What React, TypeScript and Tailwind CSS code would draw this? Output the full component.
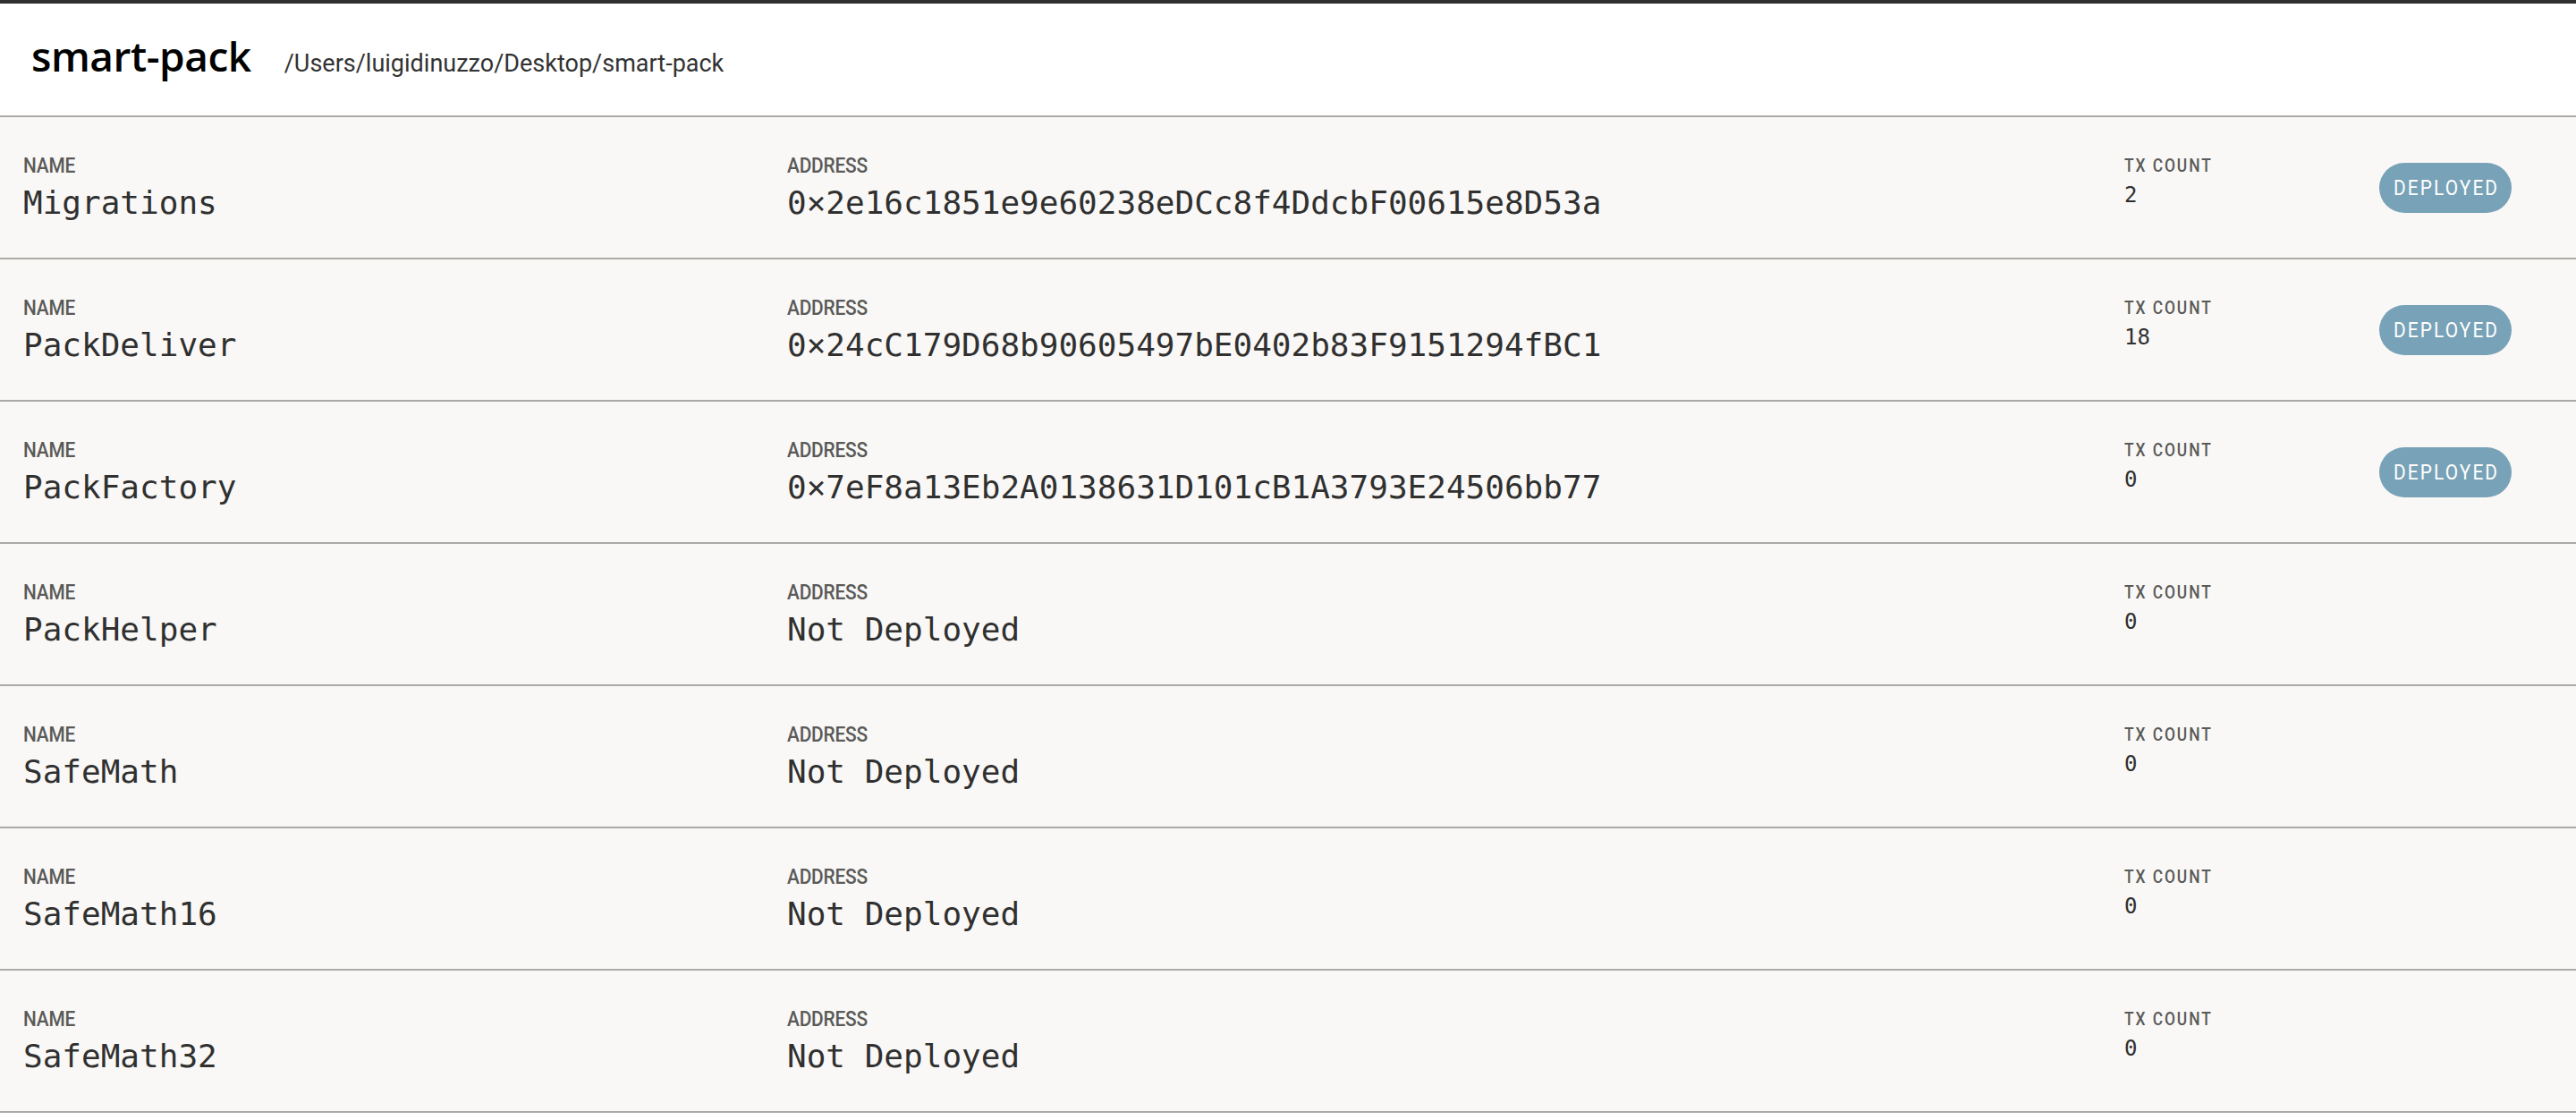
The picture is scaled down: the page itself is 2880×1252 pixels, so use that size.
import React from 'react';

type Contract = {
  name: string;
  address: string | null;
  txCount: number;
};

const contracts: Contract[] = [
  { name: 'Migrations', address: '0×2e16c1851e9e60238eDCc8f4DdcbF00615e8D53a', txCount: 2 },
  { name: 'PackDeliver', address: '0×24cC179D68b90605497bE0402b83F9151294fBC1', txCount: 18 },
  { name: 'PackFactory', address: '0×7eF8a13Eb2A0138631D101cB1A3793E24506bb77', txCount: 0 },
  { name: 'PackHelper', address: null, txCount: 0 },
  { name: 'SafeMath', address: null, txCount: 0 },
  { name: 'SafeMath16', address: null, txCount: 0 },
  { name: 'SafeMath32', address: null, txCount: 0 },
];

const labelFont = { fontFamily: 'Roboto, "Noto Sans", sans-serif' };
const monoFont = { fontFamily: '"DejaVu Sans Mono", "Liberation Mono", monospace' };

// Roboto squeezed horizontally to get the condensed look of the labels
function Label({ children, wide }: { children: React.ReactNode; wide?: boolean }) {
  return (
    <div className="h-[22px]">
      <span
        className={`inline-block origin-left scale-x-[0.87] leading-[22px] font-medium text-[#5a5a58] ${wide ? 'text-[20px] tracking-[0.11em]' : 'text-[24px] tracking-[-0.01em]'}`}
        style={labelFont}
      >
        {children}
      </span>
    </div>
  );
}

function ContractRow({ contract }: { contract: Contract }) {
  return (
    <div className="grid grid-cols-[854px_1495px_285px_1fr] h-[159px] pl-[26px] bg-[#f9f8f6] border-b-2 border-[#abaaa7]">
      <div className="pt-[43px]">
        <Label>NAME</Label>
        <div className="mt-[13px] text-[36px] leading-[36px] text-[#303030]" style={monoFont}>
          {contract.name}
        </div>
      </div>
      <div className="pt-[43px]">
        <Label>ADDRESS</Label>
        <div className="mt-[13px] text-[36px] leading-[36px] text-[#303030]" style={monoFont}>
          {contract.address ?? 'Not Deployed'}
        </div>
      </div>
      <div className="pt-[43px]">
        <Label wide>TX COUNT</Label>
        <div className="mt-[10px] text-[24px] leading-[24px] text-[#303030]" style={monoFont}>
          {contract.txCount}
        </div>
      </div>
      <div className="flex items-center">
        {contract.address && (
          <span className="inline-flex items-center justify-center w-[148px] h-[56px] rounded-full bg-[#78a2b7] text-white">
            <span
              className="inline-block origin-center scale-x-[0.87] text-[24px] tracking-[0.1em] pl-[0.1em]"
              style={labelFont}
            >
              DEPLOYED
            </span>
          </span>
        )}
      </div>
    </div>
  );
}

export default function App() {
  return (
    <div className="min-h-screen bg-white border-t-4 border-[#2f2f2f]">
      <header className="h-[127px] flex items-center pl-[35px] pb-[2px] bg-white border-b-2 border-[#abaaa7]">
        <div className="flex items-baseline gap-[37px]">
          <h1
            className="text-[46px] leading-[46px] font-semibold text-black tracking-[-0.01em]"
            style={{ fontFamily: '"Open Sans", "Noto Sans", sans-serif' }}
          >
            smart-pack
          </h1>
          <span className="text-[27px] text-[#333]" style={labelFont}>
            /Users/luigidinuzzo/Desktop/smart-pack
          </span>
        </div>
      </header>
      <main>
        {contracts.map((c) => (
          <ContractRow key={c.name} contract={c} />
        ))}
      </main>
    </div>
  );
}
